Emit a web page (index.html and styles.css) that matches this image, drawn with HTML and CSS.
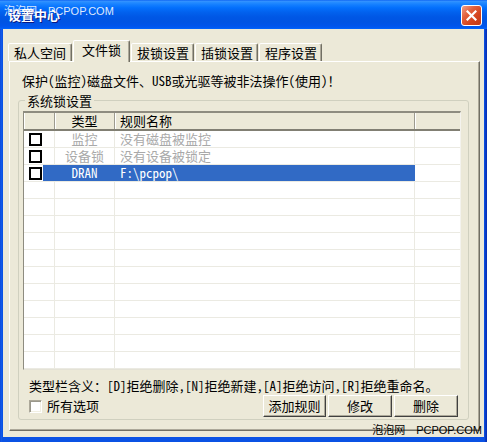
FILE: index.html
```html
<!DOCTYPE html>
<html lang="zh-CN">
<head>
<meta charset="utf-8">
<title>设置中心</title>
<link rel="stylesheet" href="styles.css">
</head>
<body>
<div class="window">
  <div class="titlebar">
    <span class="title">设置中心</span>
    <button class="close" type="button" aria-label="关闭">
      <svg width="11" height="11" viewBox="0 0 11 11"><path d="M1.5 1.5 L9.5 9.5 M9.5 1.5 L1.5 9.5" stroke="#fff" stroke-width="2.2" stroke-linecap="square" fill="none"/></svg>
    </button>
  </div>
  <div class="wm wm-top"><span class="wm-cn">泡泡网</span><span class="wm-en">PCPOP.COM</span></div>
  <div class="client">
    <div class="tabs">
      <div class="tab first">私人空间</div>
      <div class="tab active">文件锁</div>
      <div class="tab">拔锁设置</div>
      <div class="tab">插锁设置</div>
      <div class="tab">程序设置</div>
    </div>
    <div class="panel">
      <p class="intro">保护(监控)磁盘文件、USB或光驱等被非法操作(使用)！</p>
      <fieldset class="group">
        <legend>系统锁设置</legend>
        <div class="list">
          <div class="row head">
            <div class="c c1"></div>
            <div class="c c2">类型</div>
            <div class="c c3">规则名称</div>
            <div class="c c4"></div>
          </div>
          <div class="row dim">
            <div class="c c1"><span class="cb"></span></div>
            <div class="c c2">监控</div>
            <div class="c c3">没有磁盘被监控</div>
            <div class="c c4"></div>
          </div>
          <div class="row dim">
            <div class="c c1"><span class="cb"></span></div>
            <div class="c c2">设备锁</div>
            <div class="c c3">没有设备被锁定</div>
            <div class="c c4"></div>
          </div>
          <div class="row sel">
            <div class="c c1"><span class="cb"></span><span class="fill"></span></div>
            <div class="c c2">DRAN</div>
            <div class="c c3">F:\pcpop\</div>
            <div class="c c4"></div>
          </div>
          <div class="row"><div class="c c1"></div><div class="c c2"></div><div class="c c3"></div><div class="c c4"></div></div>
          <div class="row"><div class="c c1"></div><div class="c c2"></div><div class="c c3"></div><div class="c c4"></div></div>
          <div class="row"><div class="c c1"></div><div class="c c2"></div><div class="c c3"></div><div class="c c4"></div></div>
          <div class="row"><div class="c c1"></div><div class="c c2"></div><div class="c c3"></div><div class="c c4"></div></div>
          <div class="row"><div class="c c1"></div><div class="c c2"></div><div class="c c3"></div><div class="c c4"></div></div>
          <div class="row"><div class="c c1"></div><div class="c c2"></div><div class="c c3"></div><div class="c c4"></div></div>
          <div class="row"><div class="c c1"></div><div class="c c2"></div><div class="c c3"></div><div class="c c4"></div></div>
          <div class="row"><div class="c c1"></div><div class="c c2"></div><div class="c c3"></div><div class="c c4"></div></div>
          <div class="row"><div class="c c1"></div><div class="c c2"></div><div class="c c3"></div><div class="c c4"></div></div>
          <div class="row"><div class="c c1"></div><div class="c c2"></div><div class="c c3"></div><div class="c c4"></div></div>
          <div class="row"><div class="c c1"></div><div class="c c2"></div><div class="c c3"></div><div class="c c4"></div></div>
        </div>
        <p class="note">类型栏含义：[D]拒绝删除,[N]拒绝新建,[A]拒绝访问,[R]拒绝重命名。</p>
        <div class="actions">
          <label class="chk"><span class="box"></span>所有选项</label>
          <div class="btns">
            <button type="button" class="btn b1">添加规则</button>
            <button type="button" class="btn">修改</button>
            <button type="button" class="btn">删除</button>
          </div>
        </div>
      </fieldset>
    </div>
  </div>
  <div class="wm wm-bottom"><span class="wm-cn">泡泡网</span><span class="wm-en">PCPOP.COM</span></div>
</div>
</body>
</html>
```

FILE: styles.css
```css
* { box-sizing: border-box; }
html, body { margin: 0; padding: 0; }
body {
  width: 487px;
  height: 442px;
  overflow: hidden;
  background: #0A4FDF;
  font-family: "Noto Sans Mono CJK SC", "Noto Sans CJK SC", sans-serif;
  font-size: 13px;
  color: #000;
}
.window {
  position: relative;
  width: 487px;
  height: 442px;
  display: flex;
  flex-direction: column;
  background: linear-gradient(to right, #0A3FCF 0, #1660EE 1px, #0A52E4 2px, #0A52E4 484px, #0A46D6 485px, #0631B8 486px);
}
.titlebar {
  height: 29px;
  flex: none;
  display: flex;
  align-items: center;
  padding: 0 5px 0 8px;
  background: linear-gradient(to bottom, #0058EE 0, #3A93FF 1px, #288EFF 2px, #127DFF 5px, #036FFC 8px, #0262EE 12px, #0057E5 17px, #0054E3 22px, #0055EB 26px, #005BF5 28px, #026AFE 29px);
}
.title {
  flex: 1;
  color: #fff;
  font-family: "Noto Sans CJK SC", sans-serif;
  font-weight: bold;
  font-size: 13px;
  line-height: 16px;
  text-shadow: 1px 1px 0 #0A1883;
}
.close {
  width: 21px;
  height: 21px;
  padding: 0;
  margin-top: 1px;
  border: 1px solid #fff;
  border-radius: 3px;
  background: linear-gradient(135deg, #F0A08A 0, #E2603C 35%, #D4441E 65%, #C23A17 100%);
  display: flex;
  align-items: center;
  justify-content: center;
}
.close svg { display: block; }
.wm {
  position: absolute;
  font-size: 11px;
  line-height: 12px;
  white-space: nowrap;
}
.wm-cn { font-family: "Noto Sans CJK SC", sans-serif; }
.wm-en { font-family: "Liberation Sans", sans-serif; margin-left: 11px; }
.wm-top { left: 4px; top: 4px; color: rgba(255, 255, 255, 0.88); }
.wm-bottom { right: 5px; bottom: 6px; color: #000; }
.client {
  flex: 1;
  margin: 0 3px 5px;
  background: #ECE9D8;
  display: flex;
  flex-direction: column;
  padding: 11px 4px 6px 5px;
}
.tabs {
  display: flex;
  align-items: flex-end;
  height: 21px;
  flex: none;
}
.tab {
  height: 18px;
  line-height: 17px;
  padding: 0 4px 0 5px;
  margin-right: 1px;
  border: 1px solid;
  border-bottom: none;
  border-color: #fff #716F64 transparent #fff;
  border-radius: 2px 2px 0 0;
  box-shadow: inset -1px 0 0 #ACA899;
  background: #ECE9D8;
  white-space: nowrap;
}
.tab.first { padding: 0 5px; }
.tab.active {
  height: 22px;
  line-height: 18px;
  padding: 0 8px 2px;
  margin-bottom: -1px;
  position: relative;
  z-index: 1;
}
.panel {
  flex: 1;
  margin-left: 1px;
  border: 1px solid;
  border-color: #fff #716F64 #716F64 #fff;
  box-shadow: inset -1px -1px 0 #ACA899;
  padding: 11px 10px 0 8px;
}
.intro {
  margin: 0 0 0 4px;
  line-height: 16px;
  white-space: nowrap;
}
.group {
  margin: 5px 0 0;
  padding: 4px 7px 2px 4px;
  border: 1px solid #D0D0BF;
  border-radius: 3px;
  min-width: 0;
}
.group legend {
  margin-left: 2px;
  padding: 0 2px;
  line-height: 13px;
}
.list {
  height: 259px;
  overflow: hidden;
  background: #fff;
  border-style: solid;
  border-width: 2px 1px 1px 1px;
  border-color: #8E8C80 #F4F3EE #E4E2D6 #8E8C80;
}
.row {
  display: flex;
  height: 17px;
  border-bottom: 1px solid #EBEAE2;
}
.c {
  height: 16px;
  line-height: 16px;
  border-right: 1px solid #EBEAE2;
  white-space: nowrap;
}
.c1 { width: 31px; padding-left: 5px; display: flex; align-items: center; }
.c2 { width: 60px; text-align: center; }
.c3 { width: 300px; padding-left: 5px; }
.c4 { flex: 1; border-right: none; }
.row.head {
  height: 18px;
  background: #ECE9D8;
  border-bottom: 2px solid #817F73;
}
.row.head .c {
  border-right: 1px solid #9D9B8F;
  box-shadow: inset 1px 0 0 #fff;
}
.row.head .c4 { border-right: none; }
.row.dim .c { color: #A9A9A9; }
.cb {
  width: 13px;
  height: 13px;
  flex: none;
  border: 2px solid #000;
  background: #fff;
}
.fill {
  flex: 1;
  align-self: stretch;
  margin-left: 1px;
  background: #316AC5;
}
.row.sel .c1 { padding-right: 0; border-right-color: #316AC5; }
.row.sel .c2,
.row.sel .c3 {
  background: #316AC5;
  color: #fff;
  border-right-color: #316AC5;
}
.note {
  margin: 8px 0 0 6px;
  line-height: 16px;
  white-space: nowrap;
}
.actions {
  display: flex;
  align-items: center;
  height: 22px;
  margin: 1px 3px 0 6px;
}
.chk {
  display: flex;
  align-items: center;
  line-height: 16px;
}
.box {
  width: 13px;
  height: 13px;
  margin-right: 5px;
  background: #fff;
  border: 1px solid;
  border-color: #ACA899 #fff #fff #ACA899;
  box-shadow: inset 1px 1px 0 #9A988C, inset -1px -1px 0 #F1EFE2;
}
.btns {
  margin-left: auto;
  display: flex;
  gap: 2px;
}
.btn {
  width: 64px;
  height: 22px;
  padding: 0;
  font: inherit;
  line-height: 16px;
  color: #000;
  background: #ECE9D8;
  border: 1px solid;
  border-color: #fff #404040 #404040 #fff;
  box-shadow: inset -1px -1px 0 #ACA899;
}
.btn.b1 { width: 63px; }
```
